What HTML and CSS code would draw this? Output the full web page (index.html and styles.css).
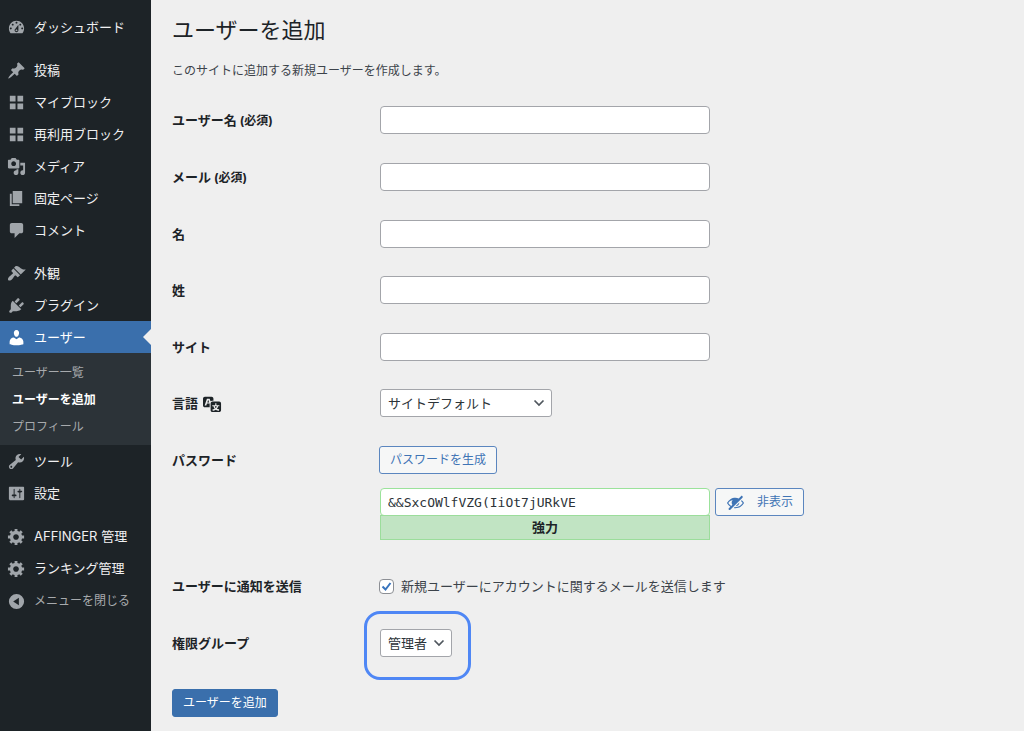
FILE: index.html
```html
<!DOCTYPE html>
<html lang="ja">
  <head>
    <meta charset="utf-8">
    <title>ユーザーを追加</title>
    <meta name="viewport" content="width=device-width">

    <link rel="stylesheet" href="styles.css">
  </head>

  <body>

    <!-- admin menu -->
    <nav class="menu">
      <ul class="menu-list">
        <li><a class="menu-item" href="#"><svg class="icon" viewBox="0 0 20 20"><path d="M3.76 16h12.48c1.1-1.37 1.76-3.11 1.76-5 0-4.42-3.58-8-8-8s-8 3.58-8 8c0 1.89.66 3.63 1.76 5zM10 4c.55 0 1 .45 1 1s-.45 1-1 1-1-.45-1-1 .45-1 1-1zM6 6c.55 0 1 .45 1 1s-.45 1-1 1-1-.45-1-1 .45-1 1-1zm8 0c.55 0 1 .45 1 1s-.45 1-1 1-1-.45-1-1 .45-1 1-1zm-5.37 5.55L12 7v6c0 1.1-.9 2-2 2s-2-.9-2-2c0-.57.24-1.08.63-1.45zM4 10c.55 0 1 .45 1 1s-.45 1-1 1-1-.45-1-1 .45-1 1-1zm12 0c.55 0 1 .45 1 1s-.45 1-1 1-1-.45-1-1 .45-1 1-1zm-5 3c0-.55-.45-1-1-1s-1 .45-1 1 .45 1 1 1 1-.45 1-1z"/></svg>ダッシュボード</a></li>
        <li class="separator"></li>
        <li><a class="menu-item" href="#"><svg class="icon" viewBox="0 0 20 20"><path d="M10.44 3.02l1.82-1.82 6.36 6.35-1.83 1.82c-1.05-.68-2.48-.57-3.41.36l-.75.75c-.92.93-1.04 2.35-.35 3.41l-1.83 1.82-2.41-2.41-2.8 2.79c-.42.42-3.38 2.71-3.8 2.29s1.86-3.39 2.28-3.81l2.79-2.79L4.1 9.36l1.83-1.82c1.05.69 2.48.57 3.4-.36l.75-.75c.93-.92 1.05-2.35.36-3.41z"/></svg>投稿</a></li>
        <li><a class="menu-item" href="#"><svg class="icon" viewBox="0 0 20 20"><path d="M3 3h6v6H3zM11 3h6v6h-6zM3 11h6v6H3zM11 11h6v6h-6z"/></svg>マイブロック</a></li>
        <li><a class="menu-item" href="#"><svg class="icon" viewBox="0 0 20 20"><path d="M3 3h6v6H3zM11 3h6v6h-6zM3 11h6v6H3zM11 11h6v6h-6z"/></svg>再利用ブロック</a></li>
        <li><a class="menu-item" href="#"><svg class="icon" viewBox="0 0 20 20"><path d="M13 11V4c0-.55-.45-1-1-1h-1.67L9 1H5L3.67 3H2c-.55 0-1 .45-1 1v7c0 .55.45 1 1 1h10c.55 0 1-.45 1-1zM7 4.5c1.38 0 2.5 1.12 2.5 2.5S8.38 9.5 7 9.5 4.5 8.38 4.5 7 5.62 4.5 7 4.5zM14 6h5v10.5c0 1.38-1.12 2.5-2.5 2.5S14 17.88 14 16.5s1.12-2.5 2.5-2.5c.17 0 .34.02.5.05V9h-3V6zm-4 8.05V13h2v3.5c0 1.38-1.12 2.5-2.5 2.5S7 17.88 7 16.5 8.12 14 9.5 14c.17 0 .34.02.5.05z"/></svg>メディア</a></li>
        <li><a class="menu-item" href="#"><svg class="icon" viewBox="0 0 20 20"><path d="M6 15V2h10v13H6zm-1 1h8v2H3V5h2v11z"/></svg>固定ページ</a></li>
        <li><a class="menu-item" href="#"><svg class="icon" viewBox="0 0 20 20"><path d="M5 2h10c1.1 0 2 .9 2 2v7c0 1.1-.9 2-2 2h-2l-5 5v-5H5c-1.1 0-2-.9-2-2V4c0-1.1.9-2 2-2z"/></svg>コメント</a></li>
        <li class="separator"></li>
        <li><a class="menu-item" href="#"><svg class="icon" viewBox="0 0 20 20"><path d="M14.48 11.06L7.41 3.99l1.5-1.5c.5-.56 2.3-.47 3.51.32 1.21.8 1.43 1.28 2.91 2.1 1.18.64 2.45 1.26 4.45.85zm-.71.71L6.7 4.7 4.93 6.47c-.39.39-.39 1.02 0 1.41l1.06 1.06c.39.39.39 1.03 0 1.42-.6.6-1.43 1.11-2.21 1.69-.35.26-.7.53-1.01.84C1.43 14.23.4 16.08 1.4 17.07c.99 1 2.84-.03 4.18-1.36.31-.31.58-.66.85-1.02.57-.78 1.08-1.61 1.69-2.21.39-.39 1.02-.39 1.41 0l1.06 1.06c.39.39 1.02.39 1.41 0z"/></svg>外観</a></li>
        <li><a class="menu-item" href="#"><svg class="icon" viewBox="0 0 20 20"><path d="M13.11 4.36L9.87 7.6 8 5.73l3.24-3.24c.35-.34 1.05-.2 1.56.32.52.51.66 1.21.31 1.55zm-8 1.77l.91-1.12 9.01 9.01-1.19.84c-.71.71-2.63 1.16-3.82 1.16H6.14L4.9 17.26c-.59.59-1.54.59-2.12 0-.59-.58-.59-1.53 0-2.12l1.24-1.24v-3.88c0-1.13.4-3.19 1.09-3.89zm7.26 3.97l3.24-3.24c.34-.35 1.04-.21 1.55.31.52.51.66 1.21.31 1.55l-3.24 3.25z"/></svg>プラグイン</a></li>
        <li>
          <a class="menu-item current" href="#"><svg class="icon" viewBox="0 0 20 20"><path d="M10 9.25c-2.27 0-2.73-3.44-2.73-3.44C7 4.02 7.82 2 9.97 2c2.16 0 2.98 2.02 2.71 3.81 0 0-.41 3.44-2.68 3.44zm0 2.57L12.72 10c2.39 0 4.52 2.33 4.52 4.53v2.49s-3.65 1.13-7.24 1.13c-3.65 0-7.24-1.13-7.24-1.13v-2.49c0-2.25 1.94-4.48 4.47-4.48z"/></svg>ユーザー</a>
          <ul class="submenu">
            <li><a href="#">ユーザー一覧</a></li>
            <li><a class="active" href="#">ユーザーを追加</a></li>
            <li><a href="#">プロフィール</a></li>
          </ul>
        </li>
        <li><a class="menu-item" href="#"><svg class="icon" viewBox="0 0 20 20"><path d="M16.68 9.77c-1.34 1.34-3.3 1.67-4.95.99l-5.41 6.52c-.99.99-2.59.99-3.58 0s-.99-2.59 0-3.57l6.52-5.42c-.68-1.65-.35-3.61.99-4.95 1.28-1.28 3.12-1.62 4.72-1.06l-2.89 2.89 2.82 2.82 2.86-2.87c.53 1.58.18 3.39-1.08 4.65zM3.81 16.21c.4.39 1.04.39 1.43 0 .4-.4.4-1.04 0-1.43-.39-.4-1.03-.4-1.43 0-.39.39-.39 1.03 0 1.43z"/></svg>ツール</a></li>
        <li><a class="menu-item" href="#"><svg class="icon" viewBox="0 0 20 20"><path d="M18 16V4c0-.55-.45-1-1-1H3c-.55 0-1 .45-1 1v12c0 .55.45 1 1 1h14c.55 0 1-.45 1-1zM8 11h1c.55 0 1 .45 1 1s-.45 1-1 1H8v1.5c0 .28-.22.5-.5.5s-.5-.22-.5-.5V13H6c-.55 0-1-.45-1-1s.45-1 1-1h1V5.5c0-.28.22-.5.5-.5s.5.22.5.5V11zm5-2h-1c-.55 0-1-.45-1-1s.45-1 1-1h1V5.5c0-.28.22-.5.5-.5s.5.22.5.5V7h1c.55 0 1 .45 1 1s-.45 1-1 1h-1v5.5c0 .28-.22.5-.5.5s-.5-.22-.5-.5V9z"/></svg>設定</a></li>
        <li class="separator"></li>
        <li><a class="menu-item" href="#"><svg class="icon" viewBox="0 0 20 20"><path d="M18 12h-2.18c-.17.7-.44 1.35-.81 1.93l1.54 1.54-2.1 2.1-1.54-1.54c-.58.36-1.23.63-1.91.79V19H8v-2.18c-.68-.16-1.33-.43-1.91-.79l-1.54 1.54-2.12-2.12 1.54-1.54c-.36-.58-.63-1.23-.79-1.91H1V9.03h2.17c.16-.7.44-1.35.8-1.94L2.43 5.55l2.1-2.1 1.54 1.54c.58-.37 1.24-.64 1.93-.81V2h3v2.18c.68.16 1.33.43 1.91.79l1.54-1.54 2.12 2.12-1.54 1.54c.36.59.64 1.24.8 1.94H18V12zm-8.5 1.5c1.66 0 3-1.34 3-3s-1.34-3-3-3-3 1.34-3 3 1.34 3 3 3z"/></svg>AFFINGER 管理</a></li>
        <li><a class="menu-item" href="#"><svg class="icon" viewBox="0 0 20 20"><path d="M18 12h-2.18c-.17.7-.44 1.35-.81 1.93l1.54 1.54-2.1 2.1-1.54-1.54c-.58.36-1.23.63-1.91.79V19H8v-2.18c-.68-.16-1.33-.43-1.91-.79l-1.54 1.54-2.12-2.12 1.54-1.54c-.36-.58-.63-1.23-.79-1.91H1V9.03h2.17c.16-.7.44-1.35.8-1.94L2.43 5.55l2.1-2.1 1.54 1.54c.58-.37 1.24-.64 1.93-.81V2h3v2.18c.68.16 1.33.43 1.91.79l1.54-1.54 2.12 2.12-1.54 1.54c.36.59.64 1.24.8 1.94H18V12zm-8.5 1.5c1.66 0 3-1.34 3-3s-1.34-3-3-3-3 1.34-3 3 1.34 3 3 3z"/></svg>ランキング管理</a></li>
        <li><button type="button" class="menu-item collapse"><svg class="icon" viewBox="0 0 20 20"><path fill-rule="evenodd" d="M10 2a8 8 0 1 0 0 16 8 8 0 0 0 0-16zM12.5 6v8L6.5 10z"/></svg>メニューを閉じる</button></li>
      </ul>
    </nav>

    <main class="content">
      <h1>ユーザーを追加</h1>
      <p class="description">このサイトに追加する新規ユーザーを作成します。</p>

      <form name="createuser">
        <table class="form-table">
          <tr>
            <th scope="row"><label for="user_login">ユーザー名 <span class="required">(必須)</span></label></th>
            <td><input type="text" id="user_login" class="text"></td>
          </tr>
          <tr>
            <th scope="row"><label for="email">メール <span class="required">(必須)</span></label></th>
            <td><input type="email" id="email" class="text"></td>
          </tr>
          <tr>
            <th scope="row"><label for="first_name">名</label></th>
            <td><input type="text" id="first_name" class="text"></td>
          </tr>
          <tr>
            <th scope="row"><label for="last_name">姓</label></th>
            <td><input type="text" id="last_name" class="text"></td>
          </tr>
          <tr>
            <th scope="row"><label for="url">サイト</label></th>
            <td><input type="url" id="url" class="text"></td>
          </tr>
          <tr>
            <th scope="row"><label class="with-icon" for="locale">言語 <svg class="icon" viewBox="0 0 20 20"><path d="M11 7H9.49c-.63 0-1.25.3-1.59.7L7 5H4.13l-2.39 7h1.69l.74-2H7v4H2c-1.1 0-2-.9-2-2V5c0-1.1.9-2 2-2h7c1.1 0 2 .9 2 2v2zM6.51 9H4.49l1-2.93zM10 8h7c1.1 0 2 .9 2 2v7c0 1.1-.9 2-2 2h-7c-1.1 0-2-.9-2-2v-7c0-1.1.9-2 2-2zm7.25 5v-1.08h-3.17V9.75h-1.16v2.17H9.75V13h1.28c.11.85.56 1.85 1.28 2.62-.87.36-1.89.62-2.31.62-.01.02.22.97.2 1.46.84 0 2.21-.5 3.28-1.15 1.09.65 2.48 1.15 3.34 1.15-.02-.49.2-1.44.2-1.46-.43 0-1.49-.27-2.38-.63.7-.77 1.14-1.77 1.25-2.61h1.36zm-3.81 1.93c-.5-.46-.85-1.13-1.01-1.93h2.09c-.17.8-.51 1.47-1 1.93l-.04.03s-.03-.02-.04-.03z"/></svg></label></th>
            <td>
              <select id="locale" class="select locale">
                <option selected>サイトデフォルト</option>
                <option>English (United States)</option>
                <option>日本語</option>
              </select>
            </td>
          </tr>
          <tr class="password-row">
            <th scope="row"><label for="pass1">パスワード</label></th>
            <td>
              <button type="button" class="button">パスワードを生成</button>
              <div class="password">
                <div class="password-field">
                  <input type="text" id="pass1" class="text strong" value="&amp;&amp;SxcOWlfVZG(IiOt7jURkVE">
                  <div class="strength">強力</div>
                </div>
                <button type="button" class="button hide"><svg class="icon" viewBox="0 0 20 20"><path d="M17.2 3.3l.16.17c.39.39.39 1.02 0 1.41L4.55 17.7c-.39.39-1.03.39-1.41 0l-.17-.17c-.39-.39-.39-1.02 0-1.41l1.59-1.6c-1.57-1-2.76-2.3-3.56-3.93.81-1.65 2.03-2.98 3.64-3.99S8.04 5.09 10 5.09c1.2 0 2.33.21 3.4.6l2.38-2.39c.39-.39 1.03-.39 1.42 0zM2.4 10.59c.69 1.23 1.71 2.25 3.05 3.05l1.28-1.28c-.51-.69-.77-1.47-.77-2.36 0-1.06.36-1.98 1.09-2.76-1.04.27-1.96.7-2.76 1.26-.8.58-1.43 1.27-1.89 2.09zm13.22-2.13l.96-.96c1.02.86 1.83 1.89 2.42 3.09-.81 1.65-2.03 2.98-3.64 3.99s-3.4 1.51-5.36 1.51c-.63 0-1.24-.07-1.83-.18l1.07-1.07c.25.02.5.05.76.05 1.63 0 3.13-.4 4.5-1.21s2.4-1.84 3.1-3.09c-.46-.82-1.09-1.51-1.89-2.09-.03-.01-.06-.03-.09-.04zm-5.58 5.54l4-4c-.01 1.1-.41 2.04-1.18 2.81-.78.78-1.72 1.18-2.82 1.19z"/></svg>非表示</button>
              </div>
            </td>
          </tr>
          <tr>
            <th scope="row">ユーザーに通知を送信</th>
            <td><label class="check-label" for="send_user_notification"><input type="checkbox" id="send_user_notification" class="check" checked>新規ユーザーにアカウントに関するメールを送信します</label></td>
          </tr>
          <tr>
            <th scope="row"><label for="role">権限グループ</label></th>
            <td>
              <div class="highlight">
                <select id="role" class="select role">
                  <option>購読者</option>
                  <option>寄稿者</option>
                  <option>投稿者</option>
                  <option>編集者</option>
                  <option selected>管理者</option>
                </select>
              </div>
            </td>
          </tr>
        </table>

        <button type="submit" class="button primary">ユーザーを追加</button>
      </form>
    </main>

  </body>
</html>
```
FILE: styles.css
```css
* { box-sizing: border-box; }
body { margin: 0; min-height: 100vh; display: flex; background-color: #efefef; color: #3c434a;
     font-family: Inter, "Noto Sans CJK JP", sans-serif; font-size: 13px; line-height: 20px; }
button, input, select { font: inherit; }
ul { list-style: none; margin: 0; padding: 0; }
.icon { width: 19px; height: 19px; flex: none; fill: currentColor; }

/* admin menu */
.menu { width: 151px; flex: none; background-color: #1d2327; }
.menu-list { padding-top: 11px; }
.menu-item { position: relative; display: flex; align-items: center; gap: 8px; width: 100%; height: 32px;
     padding: 0 7px; color: #f0f0f1; text-decoration: none; white-space: nowrap; }
.menu-item .icon { color: #a0a5aa; }
.menu-item.current { background-color: #3a6fac; color: #fff; }
.menu-item.current .icon { color: #fff; }
.menu-item.current::after { content: ""; position: absolute; right: 0; top: 8px;
     border: 8px solid transparent; border-left-width: 0; border-right-color: #efefef; }
.menu-item.collapse { height: 34px; border: 0; background: none; color: #a7aaad; font-size: 12px; }
.separator { height: 11px; }
.submenu { padding: 6px 0 5px; background-color: #2c3338; }
.submenu a { display: block; padding: 0 12px; font-size: 12px; line-height: 27px; color: #a7aaad; text-decoration: none; }
.submenu .active { color: #fff; font-weight: bold; }

/* page */
.content { flex: 1; min-width: 0; padding: 14px 20px; padding-left: 21px; }
h1 { margin: 0; font-size: 22px; line-height: 32px; font-weight: normal; color: #1d2327; }
.description { margin: 15px 0 11px; font-size: 12px; }

.form-table { width: 100%; border-collapse: collapse; }
.form-table th { width: 207px; padding: 18px 0; text-align: left; vertical-align: top; color: #1d2327; font-weight: bold; }
.form-table td { padding: 14px 0; vertical-align: top; }
.form-table tr:nth-child(even) td { padding-bottom: 15px; }
.form-table .password-row td { padding-bottom: 18px; }
.required { font-size: 12px; }
.with-icon { display: flex; align-items: center; gap: 5px; }

.text { display: block; width: 330px; max-width: 100%; height: 28px; margin: 0 1px; padding: 0 7px;
     border: 1px solid #a3a5aa; border-radius: 4px; background-color: #fff; color: #2c3338; }
.text.strong { border-color: #9be29b; font-family: "DejaVu Sans Mono", monospace; }
.strength { width: 330px; max-width: 100%; height: 25px; margin: -1px 1px 0; border: 1px solid #9bdd9b;
     background-color: #c1e4c3; color: #1d2327; font-weight: bold; line-height: 23px; text-align: center; }
.password { display: flex; align-items: flex-start; gap: 4px; margin-top: 14px; }

.select { display: block; height: 28px; margin: 0 1px; padding: 0 24px 0 7px; appearance: none;
     border: 1px solid #a3a5aa; border-radius: 3px; color: #2c3338; background-color: #fff;
     background-image: url("data:image/svg+xml,%3Csvg xmlns='http://www.w3.org/2000/svg' width='12' height='8' viewBox='0 0 12 8'%3E%3Cpath d='M1.5 1.5L6 6l4.500-4.500' fill='none' stroke='%2350575e' stroke-width='1.700'/%3E%3C/svg%3E");
     background-repeat: no-repeat; background-position: right 6px center; }
.locale { width: 172px; }
.role { width: 72px; }

.button { display: inline-flex; align-items: center; height: 28px; padding: 0 10px; border: 1px solid #5b86bf;
     border-radius: 3px; background-color: #f6f7f7; color: #3f74b5; font-size: 12px; white-space: nowrap; }
.button.hide { gap: 12px; }
.button.primary { margin-top: 18px; border-color: #3a6fac; background-color: #3a6fac; color: #fff; }

.check-label { display: flex; align-items: center; gap: 7px; height: 28px; }
.check { width: 15px; height: 15px; margin: 0; appearance: none; border: 1px solid #8c8f94; border-radius: 4px; background-color: #fff; }
.check:checked { background-image: url("data:image/svg+xml,%3Csvg xmlns='http://www.w3.org/2000/svg' viewBox='0 0 13 13'%3E%3Cpath d='M2.500 6.500L5.500 9.500L10.500 3' fill='none' stroke='%233874bd' stroke-width='2'/%3E%3C/svg%3E"); }

/* frame drawn round the role select */
.highlight { position: relative; display: inline-block; vertical-align: top; }
.highlight::after { content: ""; position: absolute; top: -18px; right: -18px; bottom: -23px; left: -15px;
     border: 3px solid #4f87f5; border-radius: 16px; pointer-events: none; }
```
